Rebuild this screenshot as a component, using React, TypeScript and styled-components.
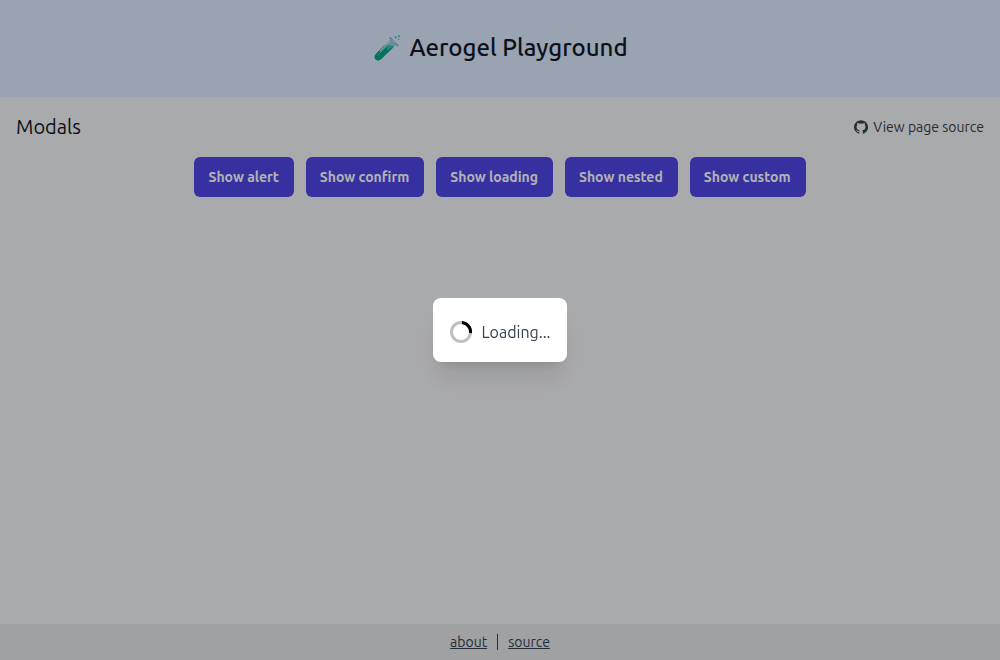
import React from "react";
import styled, { createGlobalStyle } from "styled-components";

const GlobalStyle = createGlobalStyle`
  *, *::before, *::after { box-sizing: border-box; }
  body {
    margin: 0;
    background: #f3f4f6;
    color: #111827;
    font-family: Ubuntu, "Noto Sans", "Open Sans", sans-serif;
    font-size: 16px;
    line-height: 24px;
  }
  h1, h2, p { margin: 0; }
`;

const Page = styled.div`
  display: flex;
  flex-direction: column;
  min-height: 100vh;
`;

const Header = styled.header`
  display: flex;
  align-items: center;
  justify-content: center;
  gap: 7px;
  padding: 32px 16px 33px;
  background: #dbeafe;
`;

const Title = styled.h1`
  font-size: 24px;
  font-weight: 500;
  line-height: 32px;
`;

const Main = styled.main`
  display: flex;
  flex: 1;
  flex-direction: column;
  gap: 16px;
  padding: 16px;
`;

const SectionBar = styled.div`
  display: flex;
  align-items: center;
  justify-content: space-between;
`;

const SectionTitle = styled.h2`
  font-size: 20px;
  font-weight: 400;
  line-height: 28px;
`;

const SourceLink = styled.a`
  display: flex;
  align-items: center;
  gap: 5px;
  color: #374151;
  font-size: 14px;
  line-height: 20px;
  text-decoration: none;
`;

const Actions = styled.div`
  display: flex;
  flex-wrap: wrap;
  justify-content: center;
  gap: 12px;
`;

const Button = styled.button`
  height: 40px;
  padding: 0 15px 0 14px;
  border: 0;
  border-radius: 6px;
  background: #4f46e5;
  color: #fff;
  font-family: inherit;
  font-size: 14px;
  font-weight: 700;
  line-height: 20px;
`;

const Footer = styled.footer`
  display: flex;
  align-items: center;
  justify-content: center;
  gap: 8px;
  padding: 8px;
  background: #e6e7e9;
  color: #374151;
  font-size: 14px;
  line-height: 20px;
`;

const FooterLink = styled.a`
  color: inherit;
  text-decoration: underline;
`;

const Divider = styled.span`
  width: 1px;
  height: 16px;
  margin: 0 2px;
  background: #374151;
`;

const Backdrop = styled.div`
  position: fixed;
  inset: 0;
  display: flex;
  align-items: center;
  justify-content: center;
  background: rgba(0, 0, 0, 0.3);
`;

const Modal = styled.div`
  display: flex;
  align-items: center;
  gap: 8px;
  padding: 22px 16px 18px;
  border-radius: 8px;
  background: #fff;
  color: #374151;
  font-size: 16px;
  box-shadow: 0 20px 25px -5px rgba(0, 0, 0, 0.1), 0 8px 10px -6px rgba(0, 0, 0, 0.1);
`;

const TestTubeIcon = () => (
  <svg width="30" height="28" viewBox="0 0 28 28" aria-hidden="true">
    <path d="M17.5 5.5 23 11 8.6 25.1c-1.7 1.7-4.2 2-5.9.4-1.6-1.6-1.4-4.1.3-5.8Z" fill="#9fc8e5" />
    <path d="m11.2 11.6 9.2 1.7L8.3 25.1c-1.6 1.6-4.1 1.8-5.7.3-1.5-1.5-1.3-3.9.3-5.5Z" fill="#00a884" />
    <path d="m12.2 10.6 9.2 1.7-4 2.3c-2 .5-4.6-.5-5.2-4Z" fill="#32c3a5" />
    <path d="m16.8 7.5-9.5 9.6" fill="none" stroke="#b4e6e2" strokeWidth="1.3" strokeLinecap="round" />
    <path d="m5 21 9.8-9.8" fill="none" stroke="#4bc9ad" strokeWidth="1" strokeLinecap="round" />
    <path d="m17 3.8 7.5 7.6" fill="none" stroke="#80acd9" strokeWidth="1.8" strokeLinecap="round" />
    <path d="m18.7 5.4 4.2 4.2" fill="none" stroke="#c5e1f7" strokeWidth="1" />
    <circle cx="22.6" cy="3.3" r="1.1" fill="#35c9b5" />
    <circle cx="26" cy="2.2" r="1" fill="#49bdbb" />
    <circle cx="25.6" cy="5.2" r="0.8" fill="#59cabb" />
    <circle cx="14.8" cy="15.2" r="0.9" fill="#50cbb3" />
  </svg>
);

const GithubIcon = () => (
  <svg width="14" height="14" viewBox="0 0 16 16" fill="currentColor" aria-hidden="true">
    <path d="M8 .2a8 8 0 0 0-2.53 15.59c.4.07.55-.17.55-.38v-1.49c-2.01.37-2.53-.49-2.69-.94-.09-.23-.48-.94-.82-1.13-.28-.15-.68-.52-.01-.53.63-.01 1.08.58 1.23.82.72 1.21 1.87.87 2.33.66.07-.52.28-.87.51-1.07-1.78-.2-3.64-.89-3.64-3.95 0-.87.31-1.59.82-2.15-.08-.2-.36-1.02.08-2.12 0 0 .67-.21 2.2.82a7.5 7.5 0 0 1 4 0c1.53-1.04 2.2-.82 2.2-.82.44 1.1.16 1.92.08 2.12.51.56.82 1.27.82 2.15 0 3.07-1.87 3.75-3.65 3.95.29.25.54.73.54 1.48v2.2c0 .21.15.46.55.38A8 8 0 0 0 8 .2Z" />
  </svg>
);

const Spinner = () => (
  <svg width="24" height="24" viewBox="0 0 24 24" fill="none" stroke="#000" strokeWidth="3" aria-hidden="true">
    <circle cx="12" cy="12" r="9.5" stroke="#bfbfbf" />
    <path d="M13 2.55A9.5 9.5 0 0 1 21.5 13" />
  </svg>
);

const actions = ["alert", "confirm", "loading", "nested", "custom"];

export default function App() {
  return (
    <>
      <GlobalStyle />
      <Page>
        <Header>
          <TestTubeIcon />
          <Title>Aerogel Playground</Title>
        </Header>
        <Main>
          <SectionBar>
            <SectionTitle>Modals</SectionTitle>
            <SourceLink href="#source">
              <GithubIcon />
              View page source
            </SourceLink>
          </SectionBar>
          <Actions>
            {actions.map((name) => (
              <Button key={name} type="button">Show {name}</Button>
            ))}
          </Actions>
        </Main>
        <Footer>
          <FooterLink href="#about">about</FooterLink>
          <Divider />
          <FooterLink href="#source">source</FooterLink>
        </Footer>
      </Page>
      <Backdrop>
        <Modal role="dialog" aria-modal="true" aria-label="Loading">
          <Spinner />
          <p>Loading...</p>
        </Modal>
      </Backdrop>
    </>
  );
}
